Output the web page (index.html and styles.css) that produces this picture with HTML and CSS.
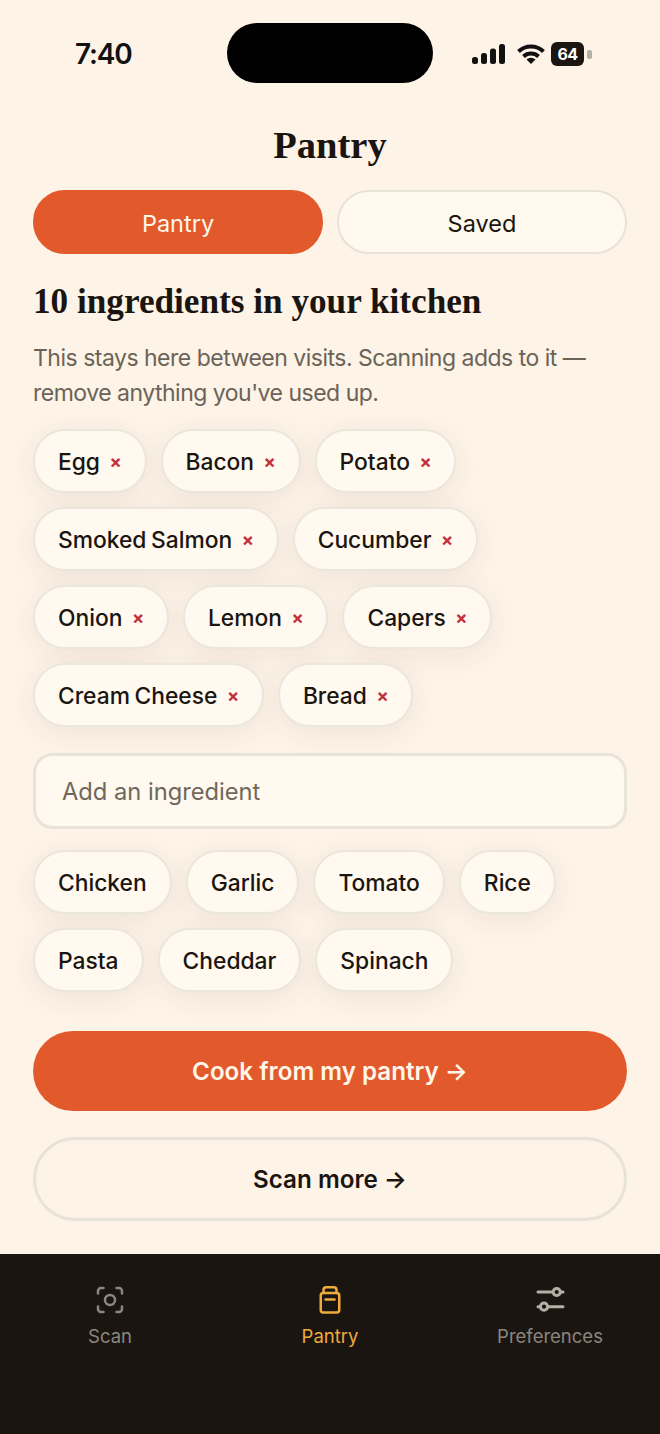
FILE: index.html
```html
<!DOCTYPE html>
<html lang="en">

<head>
    <meta charset="UTF-8">
    <meta name="viewport" content="width=device-width, initial-scale=1.0">
    <title>Pantry</title>
    <link rel="stylesheet" href="styles.css">
</head>

<body>
    <div class="phone">
        <div class="status-bar">
            <span class="time">7:40</span>
            <div class="island"></div>
            <div class="status-icons">
                <svg class="signal" width="33" height="20" viewBox="0 0 33 20">
                    <rect x="0" y="13" width="6" height="7" rx="2.500" />
                    <rect x="9" y="9" width="6" height="11" rx="2.500" />
                    <rect x="18" y="4.500" width="6" height="15.500" rx="2.500" />
                    <rect x="27" y="0" width="6" height="20" rx="2.500" />
                </svg>
                <svg class="wifi" width="28" height="20" viewBox="0 0 28 20">
                    <path d="M1.500 7.500 A18 18 0 0 1 26.500 7.500" />
                    <path d="M6.500 12.500 A11 11 0 0 1 21.500 12.500" />
                    <path class="wifi-dot" d="M14 20 L9.500 15.400 A7 7 0 0 1 18.500 15.400 Z" />
                </svg>
                <div class="battery"><span>64</span></div>
                <div class="battery-cap"></div>
            </div>
        </div>

        <main class="content">
            <h1>Pantry</h1>

            <div class="tabs">
                <button class="tab tab-active">Pantry</button>
                <button class="tab">Saved</button>
            </div>

            <h2>10 ingredients in your kitchen</h2>
            <p class="hint">This stays here between visits. Scanning adds to it — remove anything you've used up.</p>

            <div class="chips">
                <div class="chip-row">
                    <div class="chip">Egg <span class="remove">×</span></div>
                    <div class="chip">Bacon <span class="remove">×</span></div>
                    <div class="chip">Potato <span class="remove">×</span></div>
                </div>
                <div class="chip-row">
                    <div class="chip">Smoked Salmon <span class="remove">×</span></div>
                    <div class="chip">Cucumber <span class="remove">×</span></div>
                </div>
                <div class="chip-row">
                    <div class="chip">Onion <span class="remove">×</span></div>
                    <div class="chip">Lemon <span class="remove">×</span></div>
                    <div class="chip">Capers <span class="remove">×</span></div>
                </div>
                <div class="chip-row">
                    <div class="chip">Cream Cheese <span class="remove">×</span></div>
                    <div class="chip">Bread <span class="remove">×</span></div>
                </div>
            </div>

            <input class="add-input" type="text" placeholder="Add an ingredient">

            <div class="chips suggestions">
                <div class="chip-row">
                    <div class="chip">Chicken</div>
                    <div class="chip">Garlic</div>
                    <div class="chip">Tomato</div>
                    <div class="chip">Rice</div>
                </div>
                <div class="chip-row">
                    <div class="chip">Pasta</div>
                    <div class="chip">Cheddar</div>
                    <div class="chip">Spinach</div>
                </div>
            </div>

            <button class="btn btn-primary">Cook from my pantry →</button>
            <button class="btn btn-outline">Scan more →</button>
        </main>

        <nav class="tab-bar">
            <div class="nav-item">
                <svg width="32" height="32" viewBox="0 0 32 32">
                    <path d="M4 9.500 V7 A3 3 0 0 1 7 4 H9.500 M22.500 4 H25 A3 3 0 0 1 28 7 V9.500 M28 22.500 V25 A3 3 0 0 1 25 28 H22.500 M9.500 28 H7 A3 3 0 0 1 4 25 V22.500" />
                    <circle cx="16" cy="16" r="5" />
                </svg>
                <span>Scan</span>
            </div>
            <div class="nav-item nav-active">
                <svg width="32" height="32" viewBox="0 0 32 32">
                    <path d="M9.500 9 V6 A2.750 2.750 0 0 1 12.250 3.250 H19.750 A2.750 2.750 0 0 1 22.500 6 V9" />
                    <rect x="6.750" y="9" width="18.500" height="19.500" rx="2.500" />
                    <path d="M11.500 15.500 H20.500" />
                </svg>
                <span>Pantry</span>
            </div>
            <div class="nav-item nav-prefs">
                <svg width="32" height="32" viewBox="0 0 32 32">
                    <path d="M4 8 H29 M4 22.700 H29" />
                    <circle class="knob" cx="22.700" cy="8" r="3.600" />
                    <circle class="knob" cx="10" cy="22.700" r="3.600" />
                </svg>
                <span>Preferences</span>
            </div>
        </nav>
    </div>
</body>

</html>
```

FILE: styles.css
```css
* {
    box-sizing: border-box;
}

body {
    margin: 0;
    background: #FDF3E7;
    font-family: Inter, "Liberation Sans", sans-serif;
    color: #1A1510;
}

.phone {
    width: 660px;
    height: 1434px;
    display: flex;
    flex-direction: column;
    overflow: hidden;
}

.status-bar {
    height: 83px;
    padding: 23px 68px 0 75px;
    display: flex;
    align-items: flex-start;
}

.time {
    width: 152px;
    margin-top: 13px;
    font-size: 28px;
    line-height: 36px;
    font-weight: 600;
    letter-spacing: -1.200px;
    color: #111;
}

.island {
    width: 206px;
    height: 60px;
    background: #000;
    border-radius: 30px;
}

.status-icons {
    display: flex;
    align-items: center;
    margin-top: 19px;
    margin-left: auto;
    height: 24px;
}

.signal {
    fill: #111;
    margin-right: 12px;
}

.wifi {
    margin-right: 6px;
}

.wifi path {
    fill: none;
    stroke: #111;
    stroke-width: 4;
}

.wifi .wifi-dot {
    fill: #111;
    stroke: none;
}

.battery {
    width: 33px;
    height: 24px;
    background: #1A1510;
    color: #fff;
    border-radius: 6px;
    font-size: 16px;
    font-weight: 700;
    letter-spacing: -0.500px;
    line-height: 24px;
    text-align: center;
}

.battery-cap {
    width: 5px;
    height: 9px;
    margin-left: 3px;
    background: #B5AFA6;
    border-radius: 2px;
}

.content {
    flex: 1;
    padding: 0 33px;
}

h1 {
    margin: 41px 0 24px;
    font-family: "Liberation Serif", serif;
    font-size: 38.500px;
    line-height: 42px;
    font-weight: 700;
    text-align: center;
    color: #1A1510;
}

.tabs {
    display: flex;
    gap: 14px;
}

.tab {
    flex: 1;
    height: 64px;
    padding: 2px 0 0;
    border: 2px solid #E8E3D9;
    border-radius: 32px;
    background: #FFF9EE;
    font-family: inherit;
    font-size: 23.500px;
    color: #1A1510;
}

.tab-active {
    background: #E2592B;
    border-color: #E2592B;
    color: #FFF6EA;
}

h2 {
    margin: 28px 0 0;
    font-family: "Liberation Serif", serif;
    font-size: 35.200px;
    line-height: 40px;
    font-weight: 700;
    color: #1A1510;
}

.hint {
    margin: 19px 0 0;
    font-size: 23px;
    line-height: 35px;
    letter-spacing: -0.500px;
    color: #6B6358;
}

.chips {
    display: flex;
    flex-direction: column;
    gap: 14px;
    margin-top: 18px;
}

.chip-row {
    display: flex;
    gap: 14px;
}

.chip {
    height: 64px;
    padding: 1px 23px 0;
    display: flex;
    align-items: center;
    gap: 9.500px;
    background: #FFF9EF;
    border: 2px solid #ECE7DD;
    border-radius: 32px;
    box-shadow: 0 6px 30px rgba(70, 50, 30, 0.08);
    font-size: 22.800px;
    font-weight: 450;
    word-spacing: -1.500px;
    white-space: nowrap;
}

.remove {
    width: 12px;
    text-align: center;
    font-size: 18px;
    font-weight: 700;
    color: #C22F3D;
}

.add-input {
    display: block;
    width: 100%;
    height: 76px;
    margin-top: 26px;
    padding: 0 26px;
    background: #FFF9EF;
    border: 3px solid #E9E4DA;
    border-radius: 20px;
    font-family: inherit;
    font-size: 23.700px;
    outline: none;
}

.add-input::placeholder {
    color: #6F675C;
    opacity: 1;
}

.suggestions {
    margin-top: 21px;
}

.btn {
    display: block;
    width: 100%;
    font-family: inherit;
    font-size: 24.200px;
    font-weight: 600;
    border-radius: 42px;
}

.btn-primary {
    height: 80px;
    margin-top: 39px;
    background: #E2592B;
    border: none;
    color: #FFF6EA;
}

.btn-outline {
    height: 84px;
    margin-top: 26px;
    background: transparent;
    border: 3px solid #E8E3D9;
    color: #1A1510;
}

.tab-bar {
    height: 180px;
    background: #1A1510;
    display: flex;
    padding-top: 30px;
}

.nav-item {
    flex: 1;
    display: flex;
    flex-direction: column;
    align-items: center;
    gap: 8px;
    font-size: 18.500px;
    line-height: 24px;
    color: #8C867D;
}

.nav-item svg {
    fill: none;
    stroke: currentColor;
    stroke-width: 2.500;
    stroke-linecap: round;
}

.nav-prefs svg {
    stroke: #B5B0A6;
    stroke-width: 3;
}

.nav-item .knob {
    fill: #1A1510;
}

.nav-active {
    color: #F0AB3C;
}
```
